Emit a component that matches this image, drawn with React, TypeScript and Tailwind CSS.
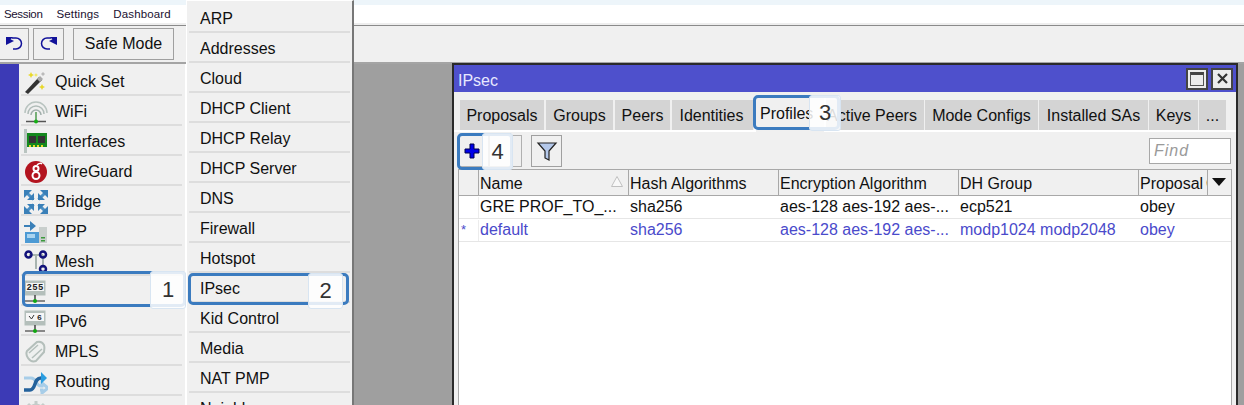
import React from "react";

const Wand = () => (
  <svg width="24" height="24" viewBox="0 0 24 24">
    <path d="M1 22L15 7l3 3L4 24z" fill="#333" />
    <path d="M13 9l3-3 3 3-3 3z" fill="#aaa" />
    <path d="M17 4l2-2 2 2-2 2z" fill="#bbb" />
    <path d="M7 2l1 2 2 1-2 1-1 2-1-2-2-1 2-1z" fill="#e8d82a" />
    <path d="M18 14l1 2 2 1-2 1-1 2-1-2-2-1 2-1z" fill="#e8d82a" />
    <path d="M12 3l.7 1.3L14 5l-1.3.7L12 7l-.7-1.3L10 5l1.3-.7z" fill="#f0e860" />
  </svg>
);
const Wifi = () => (
  <svg width="24" height="24" viewBox="0 0 24 24" fill="none">
    <path d="M1 13a11 11 0 0 1 22 0" stroke="#b9c4c0" strokeWidth="1.500" />
    <path d="M4 14a8 8 0 0 1 16 0" stroke="#b0bcb8" strokeWidth="1.500" />
    <path d="M7 15a5 5 0 0 1 10 0" stroke="#a0aeaa" strokeWidth="1.500" />
    <path d="M12 12v10" stroke="#4f9a4f" strokeWidth="1.500" />
    <path d="M2 21.500h20" stroke="#555" strokeWidth="1.500" />
    <circle cx="12" cy="21.500" r="2" fill="#16b016" />
  </svg>
);
const Interfaces = () => (
  <svg width="24" height="26" viewBox="0 0 24 26">
    <rect x="0" y="0" width="3" height="24" fill="#b9c4c0" />
    <rect x="3" y="4" width="20" height="14" fill="#15881f" />
    <rect x="5" y="7" width="7" height="7" fill="#333" />
    <rect x="14" y="7" width="7" height="7" fill="#333" />
    <path d="M5 16h2v2H5zm4 0h2v2H9zm4 0h2v2h-2zm4 0h2v2h-2z" fill="#e8d82a" />
  </svg>
);
const WireGuard = () => (
  <svg width="24" height="24" viewBox="0 0 24 24" fill="none">
    <circle cx="12" cy="12" r="11" fill="#b3141f" />
    <circle cx="12" cy="15.500" r="3.500" stroke="#fff" strokeWidth="2" />
    <circle cx="12" cy="8.500" r="2.500" stroke="#fff" strokeWidth="2" />
    <path d="M13 5c2-2 4-2 5-1" stroke="#fff" strokeWidth="1.500" />
  </svg>
);
const Bridge = () => (
  <svg width="24" height="24" viewBox="0 0 24 24">
    <g stroke="#4a8fc4" strokeWidth="3" fill="none">
      <path d="M3 3l6.500 6.500M21 3l-6.500 6.500M3 21l6.500-6.500M21 21l-6.500-6.500" />
    </g>
    <g fill="#3a80b8">
      <path d="M0 0h8L0 8zM24 0h-8l8 8zM10 10V3l-7 7zM14 10V3l7 7zM0 24h8l-8-8zM24 24h-8l8-8zM10 14v7l-7-7zM14 14v7l7-7z" />
    </g>
  </svg>
);
const Ppp = () => (
  <svg width="24" height="24" viewBox="0 0 24 24">
    <path d="M0 5h6V1l6 5-6 5V7H0z" fill="#3a80b8" />
    <rect x="15" y="7" width="8" height="16" fill="#c9cfcd" />
    <rect x="17" y="17" width="4" height="1.500" fill="#3c9a3c" />
    <rect x="17" y="20" width="4" height="1.500" fill="#3c9a3c" />
    <rect x="1" y="12" width="14" height="11" fill="#4c9ad4" />
    <rect x="3" y="14" width="8" height="4" fill="#a9d4f0" />
  </svg>
);
const Mesh = () => (
  <svg width="24" height="24" viewBox="0 0 24 24" fill="none">
    <path d="M5 5h14M12 5v14M19 5v13" stroke="#a8b4b0" strokeWidth="2" />
    <circle cx="4.500" cy="4.500" r="3" stroke="#12127a" strokeWidth="2.500" />
    <circle cx="19" cy="4.500" r="3" stroke="#12127a" strokeWidth="2.500" />
    <circle cx="19" cy="19" r="3" stroke="#12127a" strokeWidth="2.500" />
  </svg>
);
const Ip = ({ six }: { six?: boolean }) => (
  <svg width="24" height="24" viewBox="0 0 24 24" fill="none">
    <rect x="0.500" y="0.500" width="21" height="15" fill="#b4bfbb" />
    <rect x="2" y="3" width="18" height="8" fill="#f6f6f6" />
    {six ? (
      <>
        <path d="M5 6l2.500 3L10 5" stroke="#333" strokeWidth="1" />
        <text x="13" y="10" fontFamily="Liberation Mono, monospace" fontWeight="700" fontSize="8" fill="#222">6</text>
      </>
    ) : (
      <text x="2.500" y="10" fontFamily="Liberation Mono, monospace" fontWeight="700" fontSize="9" fill="#222" textLength="17">255</text>
    )}
    <path d="M11 15v6" stroke="#444" strokeWidth="1.500" />
    <path d="M1 21h20" stroke="#666" strokeWidth="1.500" />
    <circle cx="11" cy="21" r="2" fill="#10a810" />
  </svg>
);
const Mpls = () => (
  <svg width="24" height="24" viewBox="0 0 24 24" fill="none">
    <path d="M3 11L13 2c4-1 6 1 7 3 1 3 0 5 0 7l-8 9c-3 1-6 0-8-3-2-3-2-5-1-7z" fill="#eef0ef" stroke="#b4bfbb" strokeWidth="2" />
    <path d="M5 13l9-8M8 18l10-9" stroke="#b4bfbb" strokeWidth="1.500" />
  </svg>
);
const Routing = () => (
  <svg width="24" height="24" viewBox="0 0 24 24" fill="none">
    <path d="M0 8h7c3 0 4 2 5 4s2 4 5 4h1v-3l6 5-6 5v-3h-2" stroke="#a7cde8" strokeWidth="3" fill="none" />
    <path d="M0 20h6c3 0 4-3 5-6s2-6 6-6h1" stroke="#24629c" strokeWidth="3.500" />
    <path d="M17 2l6 6-6 6z" fill="#2b9de0" />
  </svg>
);
const Gear = () => (
  <svg width="24" height="24" viewBox="0 0 24 24" fill="none">
    <circle cx="12" cy="12" r="7" stroke="#c4ccc9" strokeWidth="3" />
    <path d="M12 1v4M12 19v4M1 12h4M19 12h4M4 4l3 3M17 17l3 3M20 4l-3 3M7 17l-3 3" stroke="#c4ccc9" strokeWidth="3" />
  </svg>
);

const leftRows: { label: string; icon: React.ReactNode; arrow?: boolean }[] = [
  { label: "Quick Set", icon: <Wand /> },
  { label: "WiFi", icon: <Wifi /> },
  { label: "Interfaces", icon: <Interfaces /> },
  { label: "WireGuard", icon: <WireGuard /> },
  { label: "Bridge", icon: <Bridge /> },
  { label: "PPP", icon: <Ppp /> },
  { label: "Mesh", icon: <Mesh /> },
  { label: "IP", icon: <Ip />, arrow: true },
  { label: "IPv6", icon: <Ip six />, arrow: true },
  { label: "MPLS", icon: <Mpls />, arrow: true },
  { label: "Routing", icon: <Routing />, arrow: true },
  { label: "", icon: <Gear />, arrow: true },
];

const subRows = [
  "ARP", "Addresses", "Cloud", "DHCP Client", "DHCP Relay", "DHCP Server", "DNS",
  "Firewall", "Hotspot", "IPsec", "Kid Control", "Media", "NAT PMP", "Neighbors",
];

const tabs: { label: string; cls: string }[] = [
  { label: "Proposals", cls: "w-[84px]" },
  { label: "Groups", cls: "w-[67px]" },
  { label: "Peers", cls: "w-[55px]" },
  { label: "Identities", cls: "w-[81px] pr-[2px]" },
];
const tabsRight: { label: string; cls: string }[] = [
  { label: "Active Peers", cls: "w-[98px] pr-[6px]" },
  { label: "Mode Configs", cls: "w-[113px]" },
  { label: "Installed SAs", cls: "w-[109px]" },
  { label: "Keys", cls: "w-[49px]" },
  { label: "...", cls: "w-[27px]" },
];

const cols = ["w-[150px]", "w-[150px]", "w-[180px]", "w-[180px]", "w-[69px] [word-spacing:-1.5px]"];
const headers = ["Name", "Hash Algorithms", "Encryption Algorithm", "DH Group", "Proposal Check"];
const rows: { mark: string; cells: string[]; cls: string }[] = [
  { mark: "", cls: "text-[#111]", cells: ["GRE PROF_TO_...", "sha256", "aes-128 aes-192 aes-...", "ecp521", "obey"] },
  { mark: "*", cls: "text-[#4a4acb]", cells: ["default", "sha256", "aes-128 aes-192 aes-...", "modp1024 modp2048", "obey"] },
];

const Arrow = () => (
  <svg className="absolute left-[164px] top-[7px]" width="9" height="16" viewBox="0 0 9 16">
    <path d="M.5.5L8 8 .5 15.500z" fill="#fafafa" stroke="#a8a8a8" />
  </svg>
);

const Callout = ({ n, cls, badge }: { n: string; cls: string; badge: string }) => (
  <>
    <div className={`absolute border-[3px] border-[#3b7bbf] rounded-[5px] ${cls}`} />
    <div className={`absolute flex items-center justify-center bg-white/85 border border-[#d8e5f2] rounded-[3px] text-[22px] leading-none text-[#333] ${badge}`}>
      {n}
    </div>
  </>
);

export default function App() {
  return (
    <div className="relative w-[1244px] h-[405px] overflow-hidden bg-[#9f9f9f] text-[16px] leading-[20px] text-[#111] font-['Liberation_Sans',Arial,sans-serif]">
      {/* Header */}
      <div className="h-[5px] bg-[#edf5fa]" />
      <div className="h-[18px] bg-white flex items-center gap-[14px] pl-[4px] text-[11.5px] tracking-[0.15px] text-[#1a1030]">
        <span className="tracking-[-0.35px]">Session</span>
        <span>Settings</span>
        <span>Dashboard</span>
      </div>
      <div className="h-[3px] bg-[#eeeeee] border-b border-[#8a8a8a]" />
      <div className="h-[38px] bg-[#f0f0f0] border-b-2 border-[#a4a4a4] flex items-center pb-[1px]">
        <div className="w-[29px] h-[32px] border border-[#a0a0a0] border-l-0 flex items-center justify-center">
          <svg width="18" height="16" viewBox="0 0 18 16" fill="none">
            <path d="M7 2h4a5.500 5.500 0 0 1 0 11H8" stroke="#12129a" strokeWidth="1.500" />
            <path d="M1 1h7L1 8z" fill="#12129a" />
            <path d="M1 1v8l8-4z" fill="#12129a" />
          </svg>
        </div>
        <div className="w-[31px] h-[32px] ml-[4px] border border-[#a0a0a0] flex items-center justify-center">
          <svg width="18" height="16" viewBox="0 0 18 16" fill="none">
            <path d="M11 2H7a5.500 5.500 0 0 0 0 11h3" stroke="#12129a" strokeWidth="1.500" />
            <path d="M17 1v8l-8-4z" fill="#12129a" />
            <path d="M17 1h-7l7 7z" fill="#12129a" />
          </svg>
        </div>
        <div className="w-[101px] h-[32px] ml-[9px] border border-[#a0a0a0] flex items-center justify-center">
          Safe Mode
        </div>
      </div>

      {/* Side column */}
      <div className="flex">
        <div className="w-[19px] h-[341px] bg-[#3c3ab6]" />
        <div className="w-[166px] h-[341px] bg-[#f0f0f0] pl-[2px] pr-[3px] pt-[2px] overflow-hidden">
          {leftRows.map((r, i) => (
            <div key={i} className="relative h-[30px] shrink-0 border-b-2 border-[#dddddd] flex items-center pt-[3px]">
              <div className="w-[34px] pl-[3px] flex items-center justify-start">{r.icon}</div>
              <span>{r.label}</span>
              {r.arrow && <Arrow />}
            </div>
          ))}
        </div>
        <div className="w-px h-[341px] bg-white" />
      </div>

      {/* Sub menu */}
      <div className="absolute left-[186px] top-0 w-[168px] h-[405px] bg-[#f0f0f0] border-l border-t border-white border-r-2 border-r-[#777777] pt-[2px] px-[2px] overflow-hidden">
        {subRows.map((s) => (
          <div key={s} className="h-[30px] border-b-2 border-[#dddddd] flex items-center pl-[11px] pt-[3px]">
            {s}
          </div>
        ))}
      </div>

      {/* IPsec window */}
      <div className="absolute left-[452px] top-[63px] w-[786px] h-[342px] bg-[#f0f0f0] border-2 border-[#2a2a2a] border-b-0">
        <div className="h-[27px] bg-[#4e50cc] flex items-center pl-[4px] pr-[3px] text-[#e8e8ff]">
          <span className="flex-1 pt-[4px]">IPsec</span>
          <div className="w-[22px] h-[22px] bg-[#ececec] border-2 border-[#444] flex items-center justify-center">
            <div className="w-[14px] h-[14px] border border-[#555] border-t-[3px] border-t-[#444] bg-[#ececec]" />
          </div>
          <div className="w-[22px] h-[22px] ml-[3px] bg-[#ececec] border-2 border-[#444] flex items-center justify-center">
            <svg width="13" height="13" viewBox="0 0 13 13">
              <path d="M2 2l9 9M11 2l-9 9" stroke="#333" strokeWidth="2.200" />
            </svg>
          </div>
        </div>

        {/* Tabs */}
        <div className="h-[40px] flex items-end pl-[6px] border-b-2 border-b-white">
          {tabs.map((t) => (
            <div key={t.label} className={`h-[30px] mr-[2px] pt-[2px] bg-[#d4d4d4] flex items-center justify-center ${t.cls}`}>
              {t.label}
            </div>
          ))}
          <div className="h-[36px] w-[72px] -ml-px -mb-[2px] bg-[#f0f0f0] border-t-2 border-x-2 border-white flex items-center pl-[4px] pb-[3px]">
            Profiles
          </div>
          {tabsRight.map((t) => (
            <div key={t.label} className={`h-[30px] mr-[1px] pt-[2px] bg-[#d4d4d4] flex items-center justify-center ${t.cls}`}>
              {t.label}
            </div>
          ))}
        </div>

        {/* Toolbar */}
        <div className="h-[37px] flex items-center pl-[5px] pr-[5px]">
          <div className="w-[30px] h-[32px] border border-[#b0b0b0] flex items-center pl-[4px]">
            <svg width="16" height="16" viewBox="0 0 16 16">
              <path d="M6 1h4v5h5v4h-5v5H6v-5H1V6h5z" fill="#0000e8" stroke="#000050" strokeWidth="1" />
            </svg>
          </div>
          <div className="w-[33px] h-[32px] border border-[#b0b0b0]" />
          <div className="w-[31px] h-[32px] ml-[9px] border border-[#a0a0a0] flex items-center justify-center">
            <svg width="22" height="22" viewBox="0 0 22 22">
              <path d="M2 3h18l-7 8v9l-4-2v-7z" fill="#b4c8ea" stroke="#222" strokeWidth="1.200" />
            </svg>
          </div>
          <div className="flex-1" />
          <div className="w-[82px] h-[26px] bg-white border border-[#a8a8a8] pl-[4px] flex items-center italic text-[#9a9a9a] tracking-[1px]">
            Find
          </div>
        </div>

        {/* Table */}
        <div className="ml-[4px] w-[774px] h-[236px] bg-white border-l border-r border-[#a8a8a8]">
          <div className="h-[27px] flex bg-[#f0f0f0] border-y border-[#a8a8a8]">
            <div className="w-[20px] border-r border-[#a8a8a8]" />
            {headers.map((h, i) => (
              <div key={h} className={`relative pl-[1px] pt-[4px] border-r border-[#a8a8a8] overflow-hidden whitespace-nowrap ${cols[i]}`}>
                {h}
                {i === 0 && (
                  <svg className="absolute right-[5px] top-[6px]" width="12" height="11" viewBox="0 0 12 11">
                    <path d="M6 .5L11.500 10.500H.5z" fill="#f8f8f8" stroke="#c0c0c0" />
                  </svg>
                )}
              </div>
            ))}
            <div className="flex-1 flex justify-center pt-[8px] pr-[2px]">
              <svg width="14" height="8" viewBox="0 0 14 8">
                <path d="M0 0h14L7 8z" fill="#111" />
              </svg>
            </div>
          </div>
          {rows.map((r) => (
            <div key={r.cells[0]} className={`h-[23px] flex border-b border-[#e6e6e6] pt-[1px] ${r.cls}`}>
              <div className="w-[20px] pl-[2px] border-r border-[#ececec] text-[13px]">{r.mark}</div>
              {r.cells.map((c, i) => (
                <div key={i} className={`pl-[1px] whitespace-nowrap overflow-hidden ${cols[i]}`}>
                  {c}
                </div>
              ))}
            </div>
          ))}
        </div>
      </div>

      {/* Callouts */}
      <Callout n="1" cls="left-[22px] top-[271px] w-[164px] h-[36px]" badge="left-[150px] top-[271px] w-[36px] h-[38px]" />
      <Callout n="2" cls="left-[188px] top-[273px] w-[161px] h-[32px]" badge="left-[308px] top-[273px] w-[35px] h-[36px]" />
      <Callout n="3" cls="left-[753px] top-[95px] w-[87px] h-[35px]" badge="left-[809px] top-[95px] w-[32px] h-[36px]" />
      <Callout n="4" cls="left-[457px] top-[133px] w-[56px] h-[37px]" badge="left-[482px] top-[133px] w-[31px] h-[37px]" />
    </div>
  );
}
